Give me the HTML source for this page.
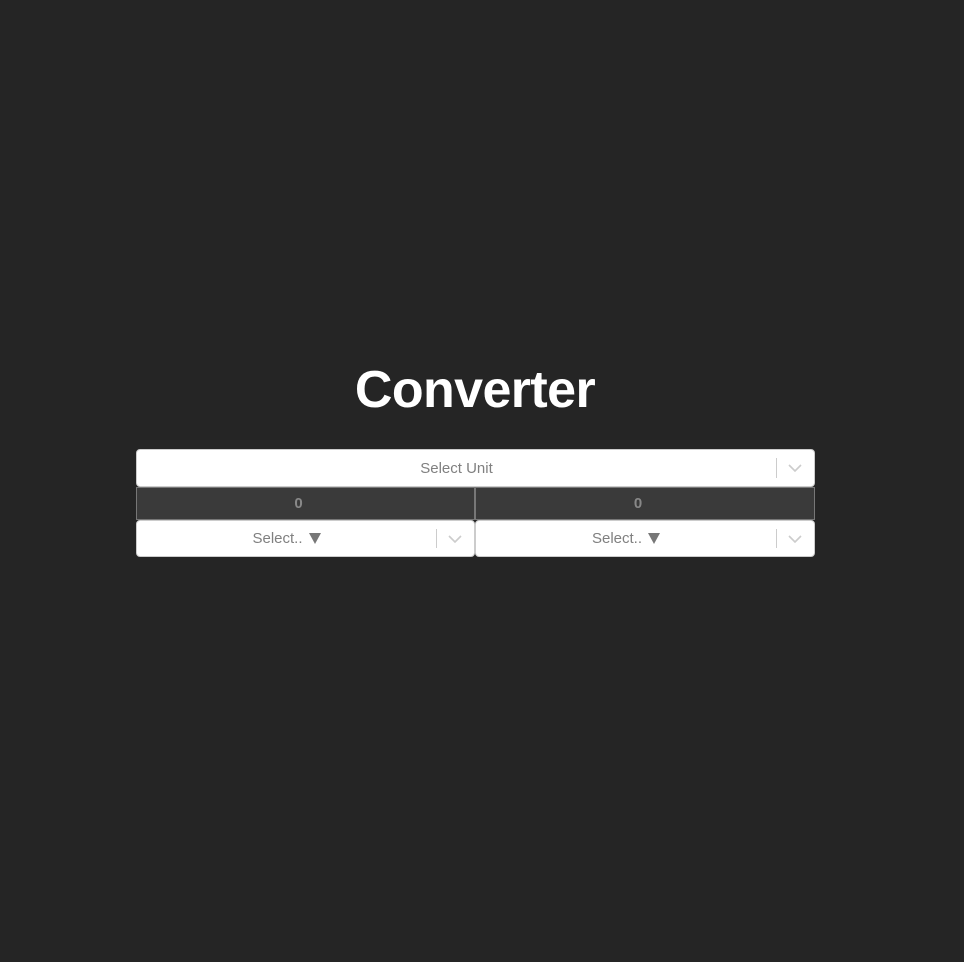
<!DOCTYPE html>
<html><head><style>
body{margin:0;background:#252525;width:964px;height:962px;font-family:"Liberation Sans",sans-serif;position:relative;overflow:hidden}
h1{position:absolute;left:0;width:950px;top:358px;margin:0;text-align:center;color:#fff;font-size:52px;font-weight:bold;letter-spacing:-0.6px;line-height:64px}
.sel{position:absolute;background:#fff;border-radius:4px;border:1px solid #ccc;box-sizing:border-box;color:#808080;font-size:15px}
.sel .t{position:absolute;left:0;right:38px;top:0;bottom:0;display:flex;align-items:center;justify-content:center}
.sel .sep{position:absolute;right:37px;top:8px;bottom:8px;width:1px;background:#ccc}
.sel svg{position:absolute;right:12px;top:50%;margin-top:-4px}
.inp{position:absolute;background:#3a3a3a;border:1px solid #777;box-sizing:border-box;color:#888;font-size:15px;font-weight:bold;display:flex;align-items:center;justify-content:center;padding-right:14px}
.tri{display:inline-block;width:0;height:0;border-left:6px solid transparent;border-right:6px solid transparent;border-top:11px solid #777;margin-left:6px}
</style></head><body>
<h1>Converter</h1>
<div class="sel" style="left:136px;top:449px;width:679px;height:38px"><div class="t">Select Unit</div><div class="sep"></div><svg width="14" height="8" viewBox="0 0 14 8"><path d="M1 1l6 6 6-6" fill="none" stroke="#ccc" stroke-width="1.6"/></svg></div>
<div class="inp" style="left:136px;top:487px;width:339px;height:33px">0</div>
<div class="inp" style="left:475px;top:487px;width:340px;height:33px">0</div>
<div class="sel" style="left:136px;top:520px;width:339px;height:37px"><div class="t">Select..<span class="tri"></span></div><div class="sep"></div><svg width="14" height="8" viewBox="0 0 14 8"><path d="M1 1l6 6 6-6" fill="none" stroke="#ccc" stroke-width="1.6"/></svg></div>
<div class="sel" style="left:475px;top:520px;width:340px;height:37px"><div class="t">Select..<span class="tri"></span></div><div class="sep"></div><svg width="14" height="8" viewBox="0 0 14 8"><path d="M1 1l6 6 6-6" fill="none" stroke="#ccc" stroke-width="1.6"/></svg></div>
</body></html>
